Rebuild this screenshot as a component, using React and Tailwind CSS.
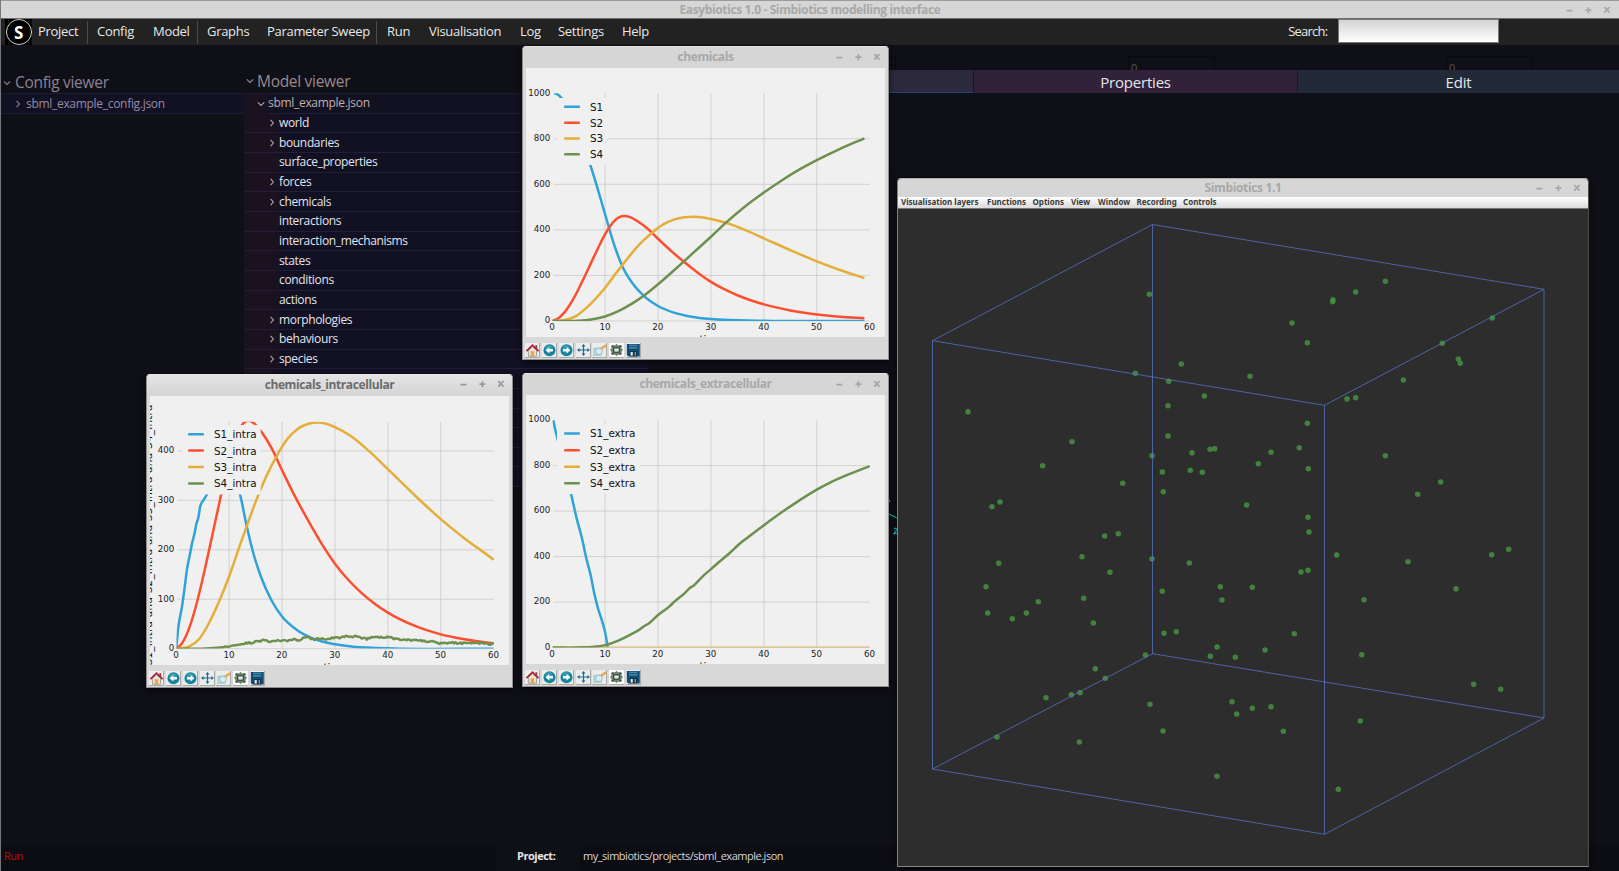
import React from "react";

const BLUE = "#30a2da";
const RED = "#fc4f30";
const YELLOW = "#e5ae38";
const GREEN = "#6d904f";

/* ---------- chart helpers ---------- */

function smooth(pts) {
  let d = `M${pts[0][0].toFixed(2)},${pts[0][1].toFixed(2)}`;
  const m = pts.map((p, i) => {
    if (i === 0 || i === pts.length - 1) {
      const a = pts[i === 0 ? 0 : i - 1];
      const b = pts[i === 0 ? 1 : i];
      return (b[1] - a[1]) / (b[0] - a[0]);
    }
    const a = pts[i - 1];
    const b = pts[i + 1];
    const h0 = p[0] - a[0];
    const h1 = b[0] - p[0];
    const s0 = (p[1] - a[1]) / h0;
    const s1 = (b[1] - p[1]) / h1;
    return s0 * s1 <= 0 ? 0 : (s0 * h1 + s1 * h0) / (h0 + h1);
  });
  for (let i = 0; i < pts.length - 1; i++) {
    const [x0, y0] = pts[i];
    const [x1, y1] = pts[i + 1];
    const h = (x1 - x0) / 3;
    d += `C${(x0 + h).toFixed(2)},${(y0 + m[i] * h).toFixed(2)} ${(x1 - h).toFixed(2)},${(y1 - m[i + 1] * h).toFixed(2)} ${x1.toFixed(2)},${y1.toFixed(2)}`;
  }
  return d;
}

function noisy(pts, amp) {
  const out = [];
  for (let t = 0; t <= 60; t += 0.3) {
    let i = 0;
    while (i < pts.length - 2 && pts[i + 1][0] < t) i++;
    const [a, va] = pts[i];
    const [b, vb] = pts[i + 1];
    const v = va + ((vb - va) * (t - a)) / (b - a);
    const k = Math.sin(t * 127.1) * 43758.5453;
    const r = k - Math.floor(k) - 0.5;
    out.push([t, Math.max(0, v + r * amp * Math.min(1, v / 10))]);
  }
  return out;
}

const S2 = [[0, 0], [1.1, 11], [2.4, 40], [4, 97], [5.5, 165], [7.3, 253], [9, 336], [10, 381], [10.9, 415], [11.8, 441], [12.7, 456], [13.6, 461], [14.7, 456], [16.2, 437], [18, 406], [20, 361], [22.4, 309], [25, 258], [27.5, 212], [30, 172], [32.5, 139.5], [35, 113], [37.5, 91], [40, 73], [45, 46.5], [50, 29], [54.5, 19], [59, 12]];
const S3 = [[0, 0], [2.4, 4], [4.3, 19], [6.2, 52], [8, 93], [10, 146], [12, 208], [13.5, 253], [15, 297], [17, 348], [19, 390], [21, 424], [23, 445], [25, 455], [26.7, 457.5], [28.5, 454.5], [30, 448], [33, 430], [36.5, 399], [40, 363], [45, 311], [50, 262], [54.5, 223], [59, 188]];

const CHEMICALS = {
  y0: 253, k: 0.2278, yTicks: [0, 200, 400, 600, 800, 1000], top: 25.3,
  box: [31, 30, 50, 67], rows: [38.8, 54.7, 70.5, 86.3], labels: ["S1", "S2", "S3", "S4"],
  series: [
    [BLUE, [[0.4, 1000], [1, 995], [1.8, 978], [4, 890], [6, 770], [7.2, 685], [8.6, 580], [10, 468], [11.5, 350], [13.2, 243], [15.1, 168], [17.3, 110], [20, 66], [23, 37], [26.3, 19], [30, 9], [34, 4], [40, 1], [59, 0]]],
    [RED, S2], [YELLOW, S3],
    [GREEN, [[0, 0], [4.9, 1], [7.4, 7], [10, 20], [12.5, 43], [15, 75], [17.5, 114], [20, 161], [22.5, 212], [25, 264], [27.5, 317], [30, 370], [33, 435], [36.5, 504], [40, 564], [43.3, 616], [46.5, 662], [50, 706], [54.5, 757], [59, 802]]],
  ],
};

const INTRA = {
  y0: 252.7, k: 0.4945, yTicks: [0, 100, 200, 300, 400], top: 25.7,
  box: [31.7, 29, 79, 69.5], rows: [38.2, 54.6, 71, 87.4], labels: ["S1_intra", "S2_intra", "S3_intra", "S4_intra"],
  yLabel: "S1_intra and S2_intra and S3_intra and S4_intra",
  series: [
    [BLUE, [[0, 0], [0.4, 43], [1.1, 85], [1.6, 124], [2, 158], [2.6, 191], [3, 213], [3.5, 235], [3.8, 252], [4.2, 266], [4.5, 286], [5.2, 301], [5.7, 310], [8, 345], [10, 350], [12.1, 310], [13.3, 249], [14.6, 192], [16, 146], [18, 98], [20, 65], [22.8, 38], [26, 20], [30, 9], [33.5, 4], [37, 2], [41, 0.5], [60, 0]]],
    [RED, [...S2, [60, 11]]], [YELLOW, [...S3, [60, 180]]],
    [GREEN, noisy([[0, 0], [5, 0], [8, 2], [10, 5], [12, 9], [14, 12], [16, 16], [17, 17], [17.6, 13], [19, 16], [21, 16], [22, 19], [23, 17], [24, 21], [25, 23], [26, 18], [27, 21], [28, 20], [30, 22], [31, 21], [32, 25], [33, 24], [34, 25], [35, 21], [36, 20], [37, 24], [38, 25], [39, 22], [40, 23], [41, 21], [42, 19], [44, 18], [46, 17], [47, 15], [48, 15], [49, 12], [50, 11], [52, 12], [54, 11], [55, 10], [57, 11], [58, 12], [59, 9], [60, 10]], 3.6)],
  ],
};

const EXTRA = {
  y0: 252.6, k: 0.2275, yTicks: [0, 200, 400, 600, 800, 1000], top: 25.3,
  box: [31, 29, 83, 70], rows: [38.5, 55.2, 71.7, 88.3], labels: ["S1_extra", "S2_extra", "S3_extra", "S4_extra"],
  series: [
    [BLUE, [[0.2, 1000], [0.6, 955], [1.1, 910], [2.5, 780], [3.6, 672], [4.6, 570], [5.7, 473], [6.4, 397], [7.3, 315], [7.9, 243], [8.6, 177], [9.5, 111], [10, 67], [10.5, 0]]],
    [RED, null], [YELLOW, [[0, 0], [60, 0]]],
    [GREEN, [[0, 0], [6, 1], [7.5, 3], [10, 11], [12.5, 31], [14.8, 57], [16.6, 81], [17.4, 95], [18.2, 105], [20, 143], [22, 178], [23.2, 204], [25.2, 243], [25.9, 260], [26.7, 272], [28.3, 310], [30, 345], [31.4, 374], [33.6, 417], [35.2, 452], [37, 485], [40, 538], [43.3, 594], [45.8, 633], [50, 694], [52.4, 724], [56, 761], [60, 798]]],
  ],
};

const tx = (t) => 26.2 + t * 5.292;

function Chart({ spec, id }) {
  const ty = (v) => spec.y0 - v * spec.k;
  const [bx, by, bw, bh] = spec.box;
  return (
    <svg width="359" height="269" viewBox="0 0 359 269" className="block shrink-0 bg-[#f0f0f0]" fontFamily="DejaVu Sans, sans-serif">
      <clipPath id={id}>
        <rect x="26.5" y={spec.top} width="317.5" height={spec.y0 - spec.top - 0.1} />
      </clipPath>
      <g stroke="#cbcbcb" strokeOpacity="0.8" strokeWidth="1">
        {[10, 20, 30, 40, 50].map((t) => <line key={t} x1={tx(t)} x2={tx(t)} y1={spec.top} y2={spec.y0} />)}
        {spec.yTicks.filter((v) => v < 1000).map((v) => <line key={v} x1="27.5" x2="343.7" y1={ty(v)} y2={ty(v)} />)}
      </g>
      <g clipPath={`url(#${id})`} fill="none" strokeWidth="2.5" strokeLinejoin="round">
        {spec.series.filter(([, pts]) => pts).map(([c, pts], i) => (
          <path key={i} stroke={c} strokeOpacity={pts.length === 2 ? 0.6 : 1} d={smooth(pts.map(([t, v]) => [tx(t), ty(v)]))} />
        ))}
      </g>
      <rect x={bx} y={by} width={bw} height={bh} fill="#f0f0f0" />
      {spec.labels.map((l, i) => (
        <g key={l}>
          <line x1="38.2" x2="53.8" y1={spec.rows[i]} y2={spec.rows[i]} stroke={spec.series[i][0]} strokeWidth="2.5" />
          <text x="64" y={spec.rows[i] + 3.9} fontSize="10.4" fill="#111">{l}</text>
        </g>
      ))}
      <g fontSize="8.7" fill="#1c1c1c">
        {spec.yTicks.map((v) => <text key={v} x="24.3" y={ty(v) + 2.3} textAnchor="end">{v}</text>)}
        {[0, 10, 20, 30, 40, 50, 60].map((t) => <text key={t} x={tx(t) - 0.2} y="262" textAnchor="middle">{t}</text>)}
      </g>
      <text x="173.5" y="275.3" fontSize="10.4" fill="#111">time</text>
      {spec.yLabel && (
        <text transform="translate(1.8 269.5) rotate(-90)" textLength="261" fontSize="10.4" fill="#111">{spec.yLabel}</text>
      )}
    </svg>
  );
}

/* ---------- toolbar ---------- */

const Home = () => (
  <>
    <path d="M3.4 7.4v5.8h8.2V7.4L7.5 3.8z" fill="#e9e4dc" stroke="#8d8d86" strokeWidth=".8" />
    <path d="M10.4 2.2h1.8v3.4h-1.8z" fill="#a33" />
    <path d="M1.4 8.2 7.5 2.2l6.1 6" fill="none" stroke="#a8243a" strokeWidth="1.8" />
    <path d="M5.7 8.2h3.5v5.2H5.7z" fill="#f2a33c" />
  </>
);
const Disc = ({ flip }) => (
  <>
    <circle cx="7.5" cy="7.2" r="6" fill="#16839c" />
    <circle cx="7" cy="5.8" r="3.8" fill="#47b1c4" opacity=".55" />
    <path transform={flip ? "translate(15 .2) scale(-1 1)" : "translate(0 .2)"} d="M3.6 7l3.7-3.2v2h3.6v2.4H7.3v2z" fill="#fff" />
  </>
);
const Move = () => (
  <path d="M7.5.9 9.5 3.5H8.1v2.9h3.3V5L14 7l-2.6 2V7.6H8.1v2.9h1.4L7.5 13.1l-2-2.6h1.4V7.6H3.6V9L1 7l2.6-2v1.4h3.3V3.5H5.5z" fill="#1b6c8c" />
);
const ZoomRect = () => (
  <>
    <rect x="1.4" y="5" width="8.2" height="7.8" fill="#b4d7df" stroke="#9cc" strokeWidth=".5" />
    <circle cx="7" cy="8.4" r="3.3" fill="#d7edf2" stroke="#8dbcc6" strokeWidth=".9" />
    <path d="M9 6 14 2.2" stroke="#eba74c" strokeWidth="2.4" />
  </>
);
const Subplots = () => (
  <>
    <rect width="15" height="14" fill="#fafafa" />
    <rect x="2.4" y="2.2" width="10.2" height="9.6" rx="1" fill="#7b8683" />
    <path d="M7.5.8 9.4 3.2H5.6zM7.5 13.2 9.4 10.8H5.6zM.9 7l2.4-1.9v3.8zM14.1 7l-2.4-1.9v3.8z" fill="#3c9a3c" />
    <path d="M2.6 3.2h2M10.4 3.2h2M2.6 10.8h2M10.4 10.8h2" stroke="#222" strokeWidth="1" />
    <rect x="4.8" y="4.9" width="5.4" height="4.2" fill="#e4e8ef" stroke="#1c1c1c" strokeWidth=".9" />
  </>
);
const Save = () => (
  <>
    <path d="M.8 1h13v12.4H2.2L.8 12z" fill="#0f4d74" />
    <rect x="3.2" y="1.6" width="8.2" height="4.2" fill="#3f88a9" />
    <path d="M3.2 3.6h8.2" stroke="#0f4d74" strokeWidth=".8" />
    <rect x="3.6" y="8" width="7.6" height="5.4" fill="#173246" />
    <rect x="4.6" y="9" width="2.2" height="3.6" fill="#dbe8ee" />
    <rect x="8.6" y="9" width="1.4" height="3.6" fill="#6fa2bb" />
  </>
);

const TOOLS = [<Home />, <Disc />, <Disc flip />, <Move />, <ZoomRect />, <Subplots />, <Save />];

function Toolbar() {
  return (
    <div className="flex gap-[1.85px] bg-[#d8d8d8] pt-[6px] pl-[2px]">
      {TOOLS.map((icon, i) => (
        <div key={i} className="h-[15px] w-[15px] border-r border-b border-[#a9a9a9] bg-[#ececec]">
          <svg width="15" height="14" viewBox="0 0 15 14">{icon}</svg>
        </div>
      ))}
    </div>
  );
}

/* ---------- window chrome ---------- */

function Controls({ className }) {
  return (
    <svg width="46" height="10" viewBox="0 0 46 10" className={className} fill="none" stroke="currentColor" strokeWidth="1.8">
      <path d="M1.4 5.6h6M20.4 5.2h6M23.4 2.2v6M39.2 2l5.4 5.6M44.6 2l-5.4 5.6" />
    </svg>
  );
}

function PlotWindow({ title, active, spec, id, className }) {
  return (
    <section className={`absolute h-[314px] w-[367px] overflow-hidden rounded-t border border-[#8f8f8f] border-t-[#e4e4e4] bg-[#d8d8d8] shadow-[0_2px_6px_rgba(0,0,0,0.7)] ${className}`}>
      <div className={active ? "relative flex h-[21px] items-center justify-center bg-gradient-to-b from-[#e4e4e4] to-[#d4d4d4] pb-[2px] text-[#6c6c6c]" : "relative flex h-[21px] items-center justify-center bg-[#d6d6d6] pb-px text-[#a8a8a8]"}>
        <h2 className="text-[12px] leading-none font-bold tracking-[-0.4px]">{title}</h2>
        <Controls className={active ? "absolute top-[4px] right-[7px] text-[#9a9a9a]" : "absolute top-[5px] right-[7px] text-[#a6a6a6]"} />
      </div>
      <div className="pl-[3px]">
        <Chart spec={spec} id={id} />
      </div>
      <Toolbar />
    </section>
  );
}

/* ---------- 3D view ---------- */

const CELLS = [
  [1149.3, 294.3], [1181.3, 364], [1135.3, 373.3], [1168.7, 381.3], [1204.3, 396], [1168, 405.7], [968, 411.7], [1168, 436], [1072, 441.7], [1152, 455.7], [1192, 452.7], [1210, 449.3], [1214.7, 448.7], [1042.7, 465.7], [1162.3, 472], [1190.3, 470.3], [1202.3, 472.3], [1122.7, 483.3], [1163.3, 491.7], [1000, 502], [992, 506.7], [1246.7, 505], [1250, 376.3],
  [1385.3, 281.3], [1355.7, 292], [1333, 299.7], [1332.7, 301.7], [1292, 323], [1307.3, 342.7], [1492.3, 318], [1442.3, 343.3], [1458.3, 359], [1460.3, 363.3], [1403.3, 380], [1347, 399], [1355.7, 397.7], [1307.3, 423.3], [1299.3, 447.7], [1271, 452.3], [1258.3, 463.7], [1308.3, 468.7], [1385.3, 455.7], [1440.7, 482], [1417.7, 494.3],
  [1104.7, 536], [1118.3, 533.7], [1082, 556.7], [998.7, 563.3], [1152, 559], [1189.3, 563], [1110, 572.3], [986, 586.7], [1162.3, 591.3], [1220.3, 586.7], [1222, 600], [1083.7, 598.3], [1038.3, 601.7], [987.7, 613], [1026.3, 613], [1012.3, 618.7], [1093.3, 623], [1164, 633.3], [1176.3, 631.7], [1217, 647], [1210.3, 656.3], [1235.3, 657.3], [1145.3, 655], [1095.3, 668.7], [1105.3, 678.3], [1080, 692.7], [1071.3, 694.7], [1046, 697.7], [1150, 704.3], [1232, 701.7], [1236.7, 714], [997, 737], [1079.3, 742], [1163, 731], [1217, 776.3],
  [1308, 517.3], [1309, 532], [1336.7, 555], [1408, 561.7], [1491.7, 554.7], [1508.7, 549.3], [1301, 572], [1308, 570.3], [1456, 588.7], [1252.3, 587.3], [1364, 599.7], [1294.3, 633.7], [1265, 650], [1361.7, 654.7], [1473.7, 684.3], [1500.7, 689.3], [1252.3, 708.3], [1271, 706.7], [1283.3, 731.3], [1360.3, 721], [1338.3, 789.3],
];

function SimWindow() {
  return (
    <section className="absolute top-[178px] left-[896px] flex h-[689px] w-[692px] flex-col overflow-hidden rounded-t border border-[#858585] border-r-[#4e4e4e] border-t-[#b0b0b0] bg-[#2d2d2d] shadow-[0_1px_6px_rgba(0,0,0,0.8)]">
      <div className="relative flex h-[18px] shrink-0 items-center justify-center bg-[#d6d6d6] text-[#a8a8a8]">
        <h2 className="text-[12px] leading-none font-bold tracking-[-0.35px]">Simbiotics 1.1</h2>
        <Controls className="absolute top-[4px] right-[7px]" />
      </div>
      <nav className="flex h-[12px] shrink-0 items-center border-b border-[#777] bg-gradient-to-b from-white to-[#dadada] pb-[2px] pl-[3px] font-['Noto_Sans',sans-serif] text-[8px] leading-none font-bold whitespace-nowrap text-[#3a3a3a]">
        <span className="w-[86px]">Visualisation layers</span>
        <span className="w-[45.5px]">Functions</span>
        <span className="w-[38.5px]">Options</span>
        <span className="w-[27px]">View</span>
        <span className="w-[38.5px]">Window</span>
        <span className="w-[46.5px]">Recording</span>
        <span>Controls</span>
      </nav>
      <svg width="690" height="657" viewBox="898 209 690 657" className="block shrink-0">
        {CELLS.map(([x, y], i) => <circle key={i} cx={x} cy={y} r="2.75" fill="#46963f" fillOpacity=".82" />)}
        <g fill="none" stroke="#5577cc" strokeOpacity=".75" strokeWidth="1">
          <path d="M1152.5 224.5 932.5 340.7 1324.5 405.3 1544 289.3z" />
          <path d="M1152.5 653.7 932.5 769 1324.5 834.3 1544 718z" />
          <path d="M1152.5 224.5V653.7M932.5 340.7V769M1324.5 405.3V834.3M1544 289.3V718" />
        </g>
      </svg>
    </section>
  );
}

/* ---------- main window ---------- */

const Caret = ({ open, className }) => (
  <svg width="8" height="8" viewBox="0 0 8 8" className={className} fill="none" stroke="currentColor" strokeWidth="1.1">
    <path d={open ? "M.8 2.4 4 5.4l3.2-3" : "M2.6.8 5.4 4 2.6 7.2"} />
  </svg>
);

const TREE = [
  ["world", 1], ["boundaries", 1], ["surface_properties", 0], ["forces", 1], ["chemicals", 1], ["interactions", 0], ["interaction_mechanisms", 0], ["states", 0], ["conditions", 0], ["actions", 0], ["morphologies", 1], ["behaviours", 1], ["species", 1], ["", 0], ["", 0], ["", 0], ["", 0], ["", 0], ["", 0],
];

const Sep = () => <i className="h-[23px] w-px bg-[#4c4c4c]" />;

export default function App() {
  return (
    <main className="relative flex h-[871px] w-[1619px] flex-col overflow-hidden border-l border-[#77777c] bg-[#0f0f17] font-['Open_Sans',sans-serif]">
      <header className="relative flex h-[19px] shrink-0 items-center justify-center border-t border-b border-t-[#9a9a9a] border-b-[#6d6d6d] bg-[#d6d6d6] text-[#a8a8a8]">
        <h1 className="text-[12px] leading-none font-bold tracking-[-0.37px]">Easybiotics 1.0 - Simbiotics modelling interface</h1>
        <Controls className="absolute top-[4px] right-[8px]" />
      </header>

      <nav className="flex h-[26px] shrink-0 items-center bg-[#222] text-[13px] tracking-[-0.3px] whitespace-nowrap text-[#e8e8e8]">
        <div className="ml-[4px] flex h-[26px] w-[27px] items-center justify-center bg-black">
          <div className="flex h-[26px] w-[26px] items-center justify-center rounded-full border border-[#cfcfcf] font-['Noto_Sans',sans-serif] text-[17px] leading-none font-bold text-white">S</div>
        </div>
        <span className="ml-[6px] w-[49px]">Project</span>
        <Sep />
        <span className="ml-[9px] w-[56px]">Config</span>
        <span className="w-[44px]">Model</span>
        <Sep />
        <span className="ml-[9px] w-[60px]">Graphs</span>
        <span className="w-[109px]">Parameter Sweep</span>
        <Sep />
        <span className="ml-[10px] w-[42px]">Run</span>
        <span className="w-[91px]">Visualisation</span>
        <span className="w-[38px]">Log</span>
        <span className="w-[64px]">Settings</span>
        <span>Help</span>
        <span className="ml-auto mr-[10.5px] tracking-[-0.75px]">Search:</span>
        <div className="mr-[120px] h-[24px] w-[161px] self-start border border-[#777] bg-gradient-to-b from-[#d4d4d4] to-white" />
      </nav>

      <div className="flex flex-1">
        <section className="w-[243px]">
          <div className="flex h-[49px] items-end gap-[4px] border-b border-[#1d1c33] pl-[2px] text-[#8c8295]">
            <Caret open className="mb-[6px]" />
            <h2 className="text-[15.5px] leading-[21px] tracking-[-0.3px]">Config viewer</h2>
          </div>
          <div className="flex h-[20px] items-center gap-[4px] border-b border-[#1f1d36] bg-[#121124] pl-[13px] text-[12px] tracking-[-0.3px] text-[#978aa3]">
            <Caret />
            <span>sbml_example_config.json</span>
          </div>
        </section>

        <section className="w-[404px]">
          <div className="flex h-[49px] items-end gap-[3px] border-b border-[#1d1c33] pb-px pl-[2px] text-[#9a8a8e]">
            <Caret open className="mb-[7px]" />
            <h2 className="text-[15.5px] leading-[22px] tracking-[-0.3px]">Model viewer</h2>
          </div>
          <div className="flex h-[19.67px] bg-[#1a1220] tracking-[-0.3px]">
            <div className="flex w-[24px] items-center justify-end pr-[3px] text-[#b3a5a0]"><Caret open /></div>
            <div className="flex flex-1 items-center border-b border-[#231e38] bg-[#121122] text-[12px] text-[#c2afac]">sbml_example.json</div>
          </div>
          {TREE.map(([label, kids], i) => (
            <div key={i} className="flex h-[19.67px] border-b border-[#231e38] bg-[#121124]">
              <div className="flex w-[35px] items-center justify-end bg-[#1a1220] pr-[3px] text-[#b0a8b0]">{kids ? <Caret /> : null}</div>
              <div className="flex items-center text-[12px] leading-none tracking-[-0.35px] text-[#e4e4ea]">{label}</div>
            </div>
          ))}
        </section>

        <section className="flex-1">
          <div className="flex h-[25px] items-end">
            <div className="ml-[160px] h-[14px] w-[88px] border border-b-0 border-[#090910]" />
            <div className="ml-[232px] h-[14px] w-[87px] overflow-hidden border border-b-0 border-[#090910] pt-[5px] pl-[2px] text-[11px] leading-[12px] text-[#55555c]">0</div>
            <div className="ml-[231px] h-[14px] w-[87px] overflow-hidden border border-b-0 border-[#090910] pt-[5px] pl-[2px] text-[11px] leading-[12px] text-[#55555c]">0</div>
          </div>
          <div className="flex h-[23px] text-[15px] tracking-[-0.2px] text-[#e6e6ea]">
            <div className="w-[325px] border-b border-[#1c4a80] bg-[#2c293c]" />
            <div className="flex w-[324px] items-center justify-center border-l border-[#1b1524] bg-[#31223a] pt-[2px]">Properties</div>
            <div className="flex flex-1 items-center justify-center border-l border-[#151b24] bg-[#212a36] pt-[2px]">Edit</div>
          </div>
          <svg width="12" height="48" viewBox="0 0 12 48" className="mt-[403px] ml-[239px] block" fill="none" stroke="#18c4c8" strokeWidth="1.3">
            <path d="M0 1 3 6M2 18 12 23M7 32.5h4l-4 5h4" />
          </svg>
        </section>
      </div>

      <footer className="flex h-[25px] shrink-0 items-center text-[11px] tracking-[-0.48px]">
        <div className="flex h-full w-[495px] items-center bg-[#0c0c13] pl-[3px] pb-[4px] text-[#c00a0a]">Run</div>
        <div className="ml-[21px] w-[63px] pb-[4px] font-bold text-[#e6e6e6]">Project:</div>
        <div className="flex h-full flex-1 items-center bg-[#0c0c13] pl-[3px] pb-[4px] text-[#d6d6da]">my_simbiotics/projects/sbml_example.json</div>
      </footer>

      <SimWindow />
      <PlotWindow title="chemicals" spec={CHEMICALS} id="clip-chem" className="top-[46px] left-[521px]" />
      <PlotWindow title="chemicals_extracellular" spec={EXTRA} id="clip-extra" className="top-[373px] left-[521px]" />
      <PlotWindow title="chemicals_intracellular" active spec={INTRA} id="clip-intra" className="top-[374px] left-[145px]" />
    </main>
  );
}
